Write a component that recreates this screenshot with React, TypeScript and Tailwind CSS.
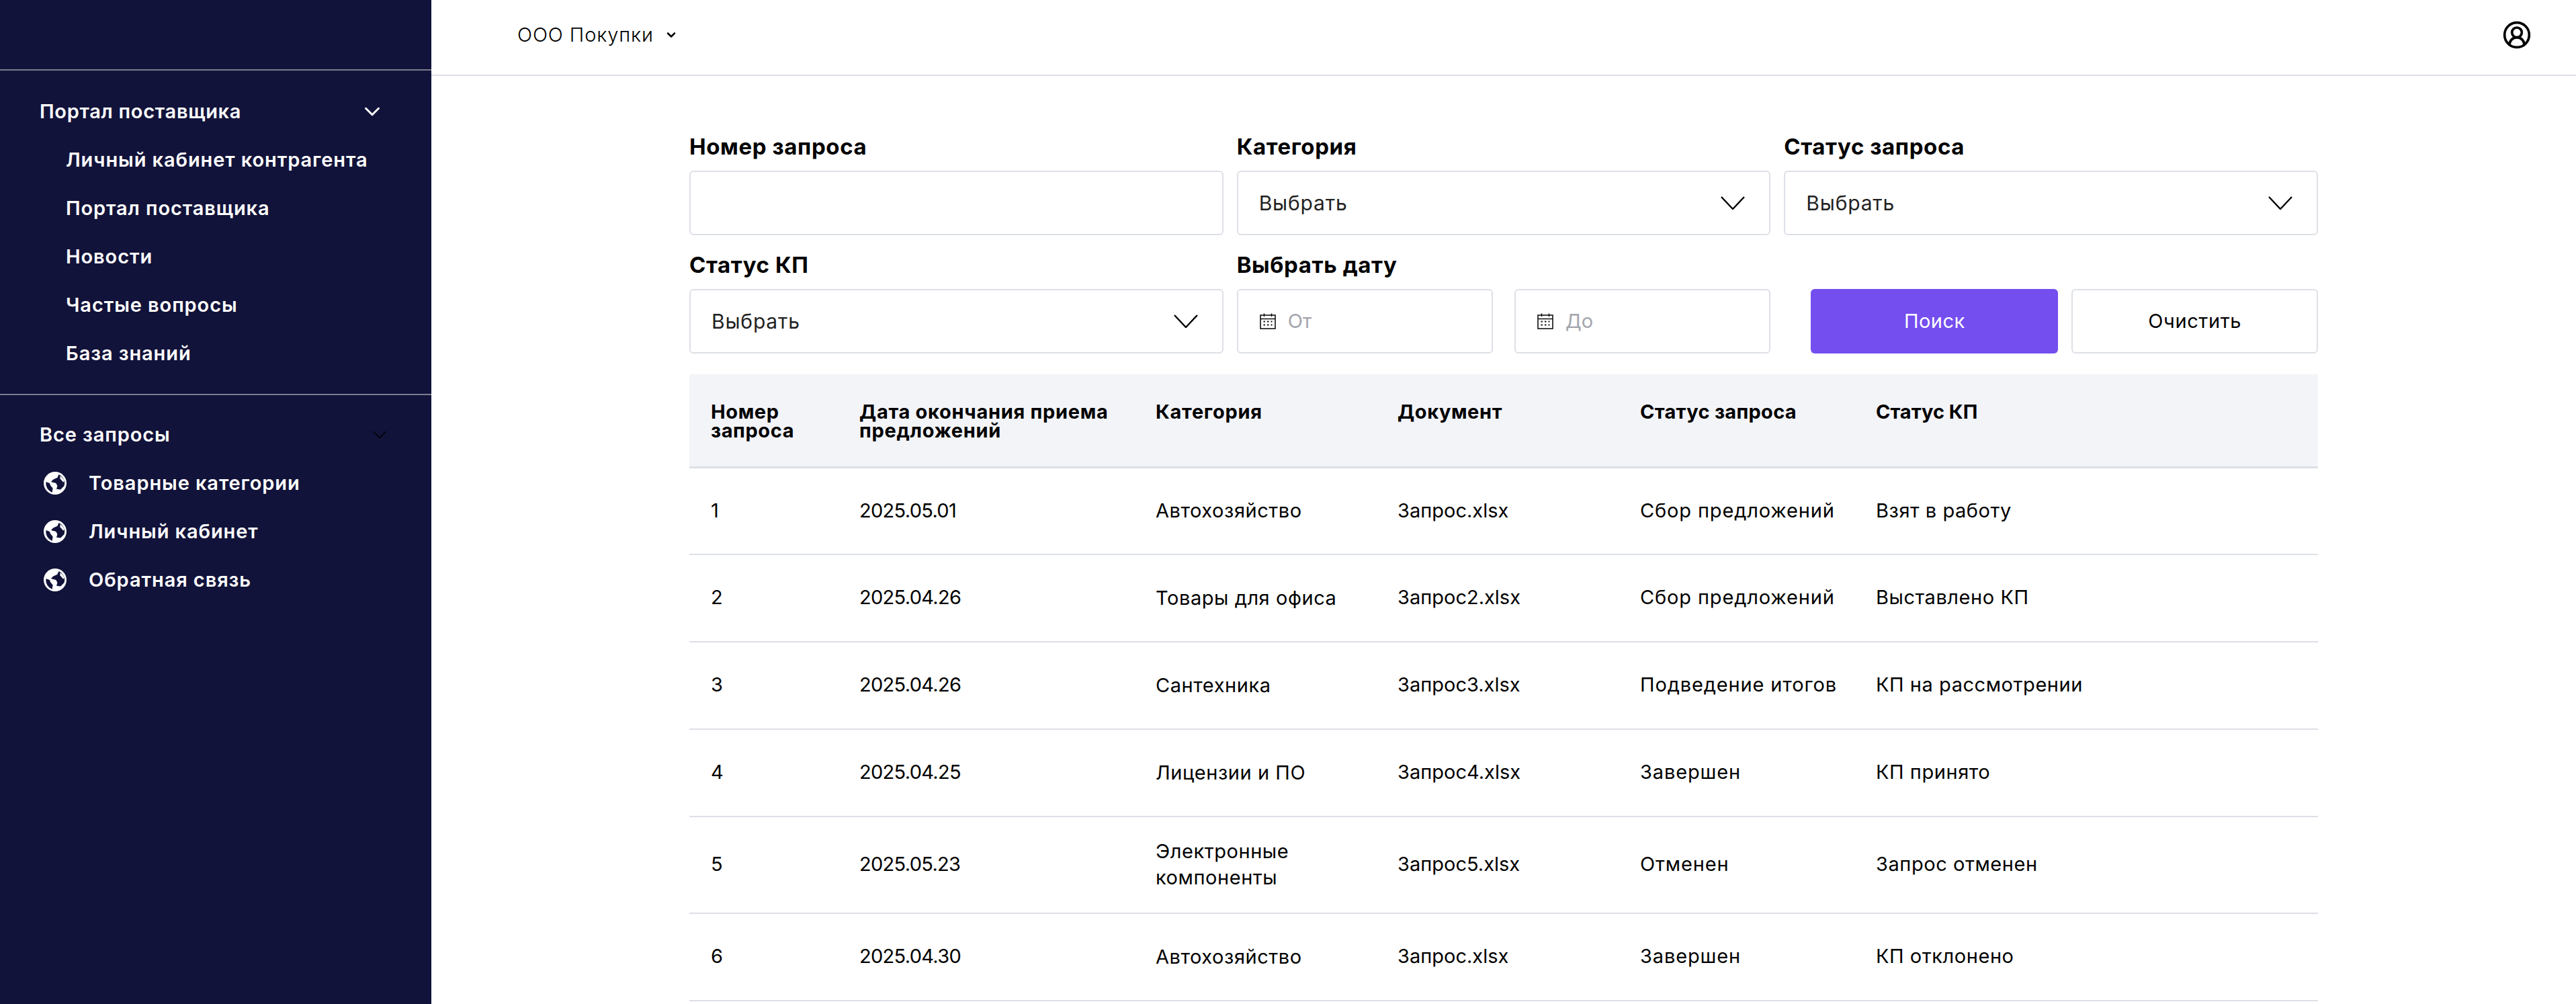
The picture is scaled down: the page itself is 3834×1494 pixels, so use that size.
import { ChevronDown, CircleUserRound } from "lucide-react";

const portalLinks = ["Личный кабинет контрагента", "Портал поставщика", "Новости", "Частые вопросы", "База знаний"];
const requestLinks = ["Товарные категории", "Личный кабинет", "Обратная связь"];

const rows = [
  { id: "1", date: "2025.05.01", category: "Автохозяйство", doc: "Запрос.xlsx", status: "Сбор предложений", offer: "Взят в работу" },
  { id: "2", date: "2025.04.26", category: "Товары для офиса", doc: "Запрос2.xlsx", status: "Сбор предложений", offer: "Выставлено КП" },
  { id: "3", date: "2025.04.26", category: "Сантехника", doc: "Запрос3.xlsx", status: "Подведение итогов", offer: "КП на рассмотрении" },
  { id: "4", date: "2025.04.25", category: "Лицензии и ПО", doc: "Запрос4.xlsx", status: "Завершен", offer: "КП принято" },
  { id: "5", date: "2025.05.23", category: "Электронные компоненты", doc: "Запрос5.xlsx", status: "Отменен", offer: "Запрос отменен" },
  { id: "6", date: "2025.04.30", category: "Автохозяйство", doc: "Запрос.xlsx", status: "Завершен", offer: "КП отклонено" },
];

function GlobeIcon() {
  return (
    <svg viewBox="0 0 100 100" className="h-[34px] w-[34px] shrink-0">
      <circle cx="50" cy="50" r="50" fill="#fff" />
      <path d="M10 44 L26 50 L30 60 L40 72 L37 91 A44 44 0 0 1 10 44 Z" fill="#12133a" />
      <path d="M66 12 L60 26 L42 34 L32 44 L54 50 L60 62 L56 76 L74 78 L90 62 A42 42 0 0 0 66 12 Z" fill="#12133a" />
      <path d="M72 18 L72 30 L86 46 L90 40 A42 42 0 0 0 72 18 Z" fill="#fff" />
    </svg>
  );
}

function CalendarIcon() {
  return (
    <svg viewBox="0 0 24 24" className="h-6 w-6 shrink-0" fill="none" stroke="#111" strokeWidth="1.6">
      <rect x="1" y="3" width="22" height="20" />
      <path d="M1 8.5H23M6.5 0.5V5M17.5 0.5V5" />
      <path d="M5.5 12.5H18.5M5.5 17.5H18.5" strokeWidth="2" strokeDasharray="2.4 3.1" />
    </svg>
  );
}

function SelectArrow() {
  return (
    <svg viewBox="0 0 36 20" className="h-5 w-9 shrink-0" fill="none" stroke="#000" strokeWidth="2.4">
      <path d="M1 1L18 19L35 1" />
    </svg>
  );
}

function FieldLabel({ children }: { children: string }) {
  return <div className="mb-4 h-10 text-[33px] leading-10 font-bold tracking-[0.6px] text-black">{children}</div>;
}

function SelectBox() {
  return (
    <div className="flex h-[96px] items-center justify-between rounded-md border-2 border-[#dde0e6] bg-white pr-[36px] pl-[31px] text-[30px] tracking-[0.8px] text-[#222]">
      <span>Выбрать</span>
      <SelectArrow />
    </div>
  );
}

function DateBox({ placeholder }: { placeholder: string }) {
  return (
    <div className="flex h-[96px] items-center gap-[18px] rounded-md border-2 border-[#dde0e6] bg-white pl-[32px] text-[29px] text-[#a3a5ad]">
      <CalendarIcon />
      <span>{placeholder}</span>
    </div>
  );
}

export default function App() {
  return (
    <div className="flex h-[1494px] overflow-hidden bg-white font-['Inter',sans-serif] text-black">
      <aside className="w-[642px] shrink-0 bg-[#12133a] text-[29px] font-semibold tracking-[0.9px] text-white">
        <div className="h-[105px] border-b-2 border-[#7b7c90]" />
        <div className="border-b-2 border-[#7b7c90] pt-[25px] pb-[24px]">
          <div className="flex h-[72px] items-center justify-between pr-[69px] pl-[59px]">
            <span className="tracking-[0.7px]">Портал поставщика</span>
            <ChevronDown size={38} strokeWidth={1.9} />
          </div>
          {portalLinks.map((link) => (
            <div key={link} className="flex h-[72px] items-center pl-[98px]">
              {link}
            </div>
          ))}
        </div>
        <div className="pt-[23px]">
          <div className="flex h-[72px] items-center justify-between pr-[59px] pl-[59px]">
            <span>Все запросы</span>
            <ChevronDown size={36} strokeWidth={1} className="text-black" />
          </div>
          {requestLinks.map((link) => (
            <div key={link} className="flex h-[72px] items-center gap-[33px] pl-[65px]">
              <GlobeIcon />
              <span>{link}</span>
            </div>
          ))}
        </div>
      </aside>

      <div className="min-w-0 flex-1">
        <header className="flex h-[113px] items-center justify-between border-b-2 border-[#dde0e6] pr-[66px] pb-[7px] pl-[128px]">
          <div className="flex items-center gap-4 text-[29px] font-light tracking-[0.9px]">
            <span>ООО Покупки</span>
            <ChevronDown size={20} strokeWidth={3} />
          </div>
          <CircleUserRound size={44} strokeWidth={2} />
        </header>

        <main className="px-[384px] pt-[85px]">
          <div className="grid grid-cols-3 gap-x-[20px] gap-y-[24px]">
            <div>
              <FieldLabel>Номер запроса</FieldLabel>
              <div className="h-[96px] rounded-md border-2 border-[#dde0e6] bg-white" />
            </div>
            <div>
              <FieldLabel>Категория</FieldLabel>
              <SelectBox />
            </div>
            <div>
              <FieldLabel>Статус запроса</FieldLabel>
              <SelectBox />
            </div>
            <div>
              <FieldLabel>Статус КП</FieldLabel>
              <SelectBox />
            </div>
            <div>
              <FieldLabel>Выбрать дату</FieldLabel>
              <div className="grid grid-cols-2 gap-[32px]">
                <DateBox placeholder="От" />
                <DateBox placeholder="До" />
              </div>
            </div>
            <div className="flex items-end gap-[20px] pl-[40px]">
              <button className="h-[96px] w-[368px] rounded-md bg-[#744eee] text-[29px] tracking-[0.5px] text-white">Поиск</button>
              <button className="h-[96px] flex-1 rounded-md border-2 border-[#dde0e6] bg-white text-[29px] tracking-[0.6px]">Очистить</button>
            </div>
          </div>

          <table className="mt-[31px] w-full table-fixed border-collapse text-left text-[29px]">
            <colgroup>
              <col className="w-[221px]" />
              <col className="w-[441px]" />
              <col className="w-[360px]" />
              <col className="w-[361px]" />
              <col className="w-[351px]" />
              <col />
            </colgroup>
            <thead>
              <tr className="h-[138px] border-b-[3px] border-[#dde0e6] bg-[#f3f4f8] text-[29px] leading-[28px] font-bold tracking-[0.6px]">
                <th className="pt-[42px] pr-4 pl-[32px] align-top font-bold">Номер запроса</th>
                <th className="pt-[42px] pr-4 pl-[32px] align-top font-bold tracking-[0.7px]">Дата окончания приема предложений</th>
                <th className="pt-[42px] pl-[32px] align-top font-bold tracking-[0.7px]">Категория</th>
                <th className="pt-[42px] pl-[32px] align-top font-bold">Документ</th>
                <th className="pt-[42px] pl-[32px] align-top font-bold tracking-[0.3px]">Статус запроса</th>
                <th className="pt-[42px] pl-[32px] align-top font-bold tracking-[0px]">Статус КП</th>
              </tr>
            </thead>
            <tbody>
              {rows.map((row) => (
                <tr key={row.id} className={`border-b-2 border-[#dde0e6] tracking-[0.55px] ${row.id === "5" ? "h-[144px]" : "h-[130px]"}`}>
                  <td className="pb-[2px] pl-[32px]">{row.id}</td>
                  <td className="pb-[2px] pl-[32px] tracking-[-0.7px]">{row.date}</td>
                  <td className="pr-6 pb-[2px] pl-[32px] leading-[39px]">{row.category}</td>
                  <td className="pb-[2px] pl-[32px] tracking-normal">{row.doc}</td>
                  <td className="pb-[2px] pl-[32px] tracking-[0.85px]">{row.status}</td>
                  <td className="pb-[2px] pl-[32px]">{row.offer}</td>
                </tr>
              ))}
            </tbody>
          </table>
        </main>
      </div>
    </div>
  );
}
